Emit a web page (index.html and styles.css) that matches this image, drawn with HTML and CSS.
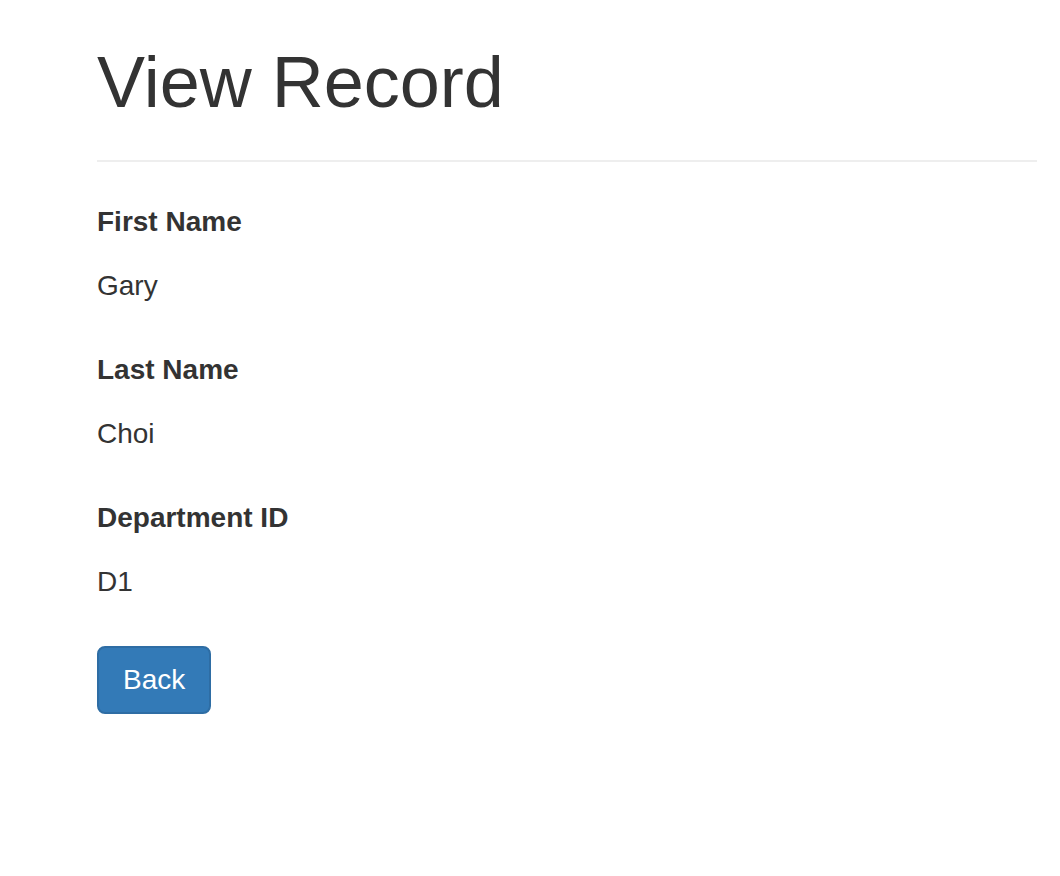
FILE: index.html
```html
<!DOCTYPE html>
<html lang="en">
<head>
<meta charset="utf-8">
<title>View Record</title>
<link rel="stylesheet" href="styles.css">
</head>
<body>
<div class="container">
  <div class="page-header">
    <h1>View Record</h1>
  </div>
  <div class="form-group">
    <label>First Name</label>
    <p class="form-control-static">Gary</p>
  </div>
  <div class="form-group">
    <label>Last Name</label>
    <p class="form-control-static">Choi</p>
  </div>
  <div class="form-group">
    <label>Department ID</label>
    <p class="form-control-static">D1</p>
  </div>
  <p class="actions"><a href="#" class="btn btn-primary">Back</a></p>
</div>
</body>
</html>
```

FILE: styles.css
```css
html, body {
  margin: 0;
  padding: 0;
  background: #fff;
}
body {
  font-family: "Liberation Sans", Arial, Helvetica, sans-serif;
  font-size: 28px;
  line-height: 40px;
  color: #333;
}
.container {
  width: 940px;
  padding-left: 97px;
  box-sizing: content-box;
}
.page-header {
  padding-bottom: 18px;
  margin: 0 0 40px;
  border-bottom: 2px solid #eee;
}
.page-header h1 {
  font-size: 72px;
  font-weight: 500;
  line-height: 1.1;
  margin: 43px 0 20px;
}
.form-group {
  margin-bottom: 30px;
}
.form-group label {
  display: block;
  font-weight: 700;
  margin-bottom: 10px;
}
.form-control-static {
  margin: 0;
  padding: 14px 0;
  min-height: 68px;
  box-sizing: border-box;
}
.actions {
  margin: 0;
}
.btn {
  display: inline-block;
  padding: 12px 24px;
  font-size: 28px;
  line-height: 40px;
  border: 2px solid transparent;
  border-radius: 8px;
  text-decoration: none;
}
.btn-primary {
  color: #fff;
  background-color: #337ab7;
  border-color: #2e6da4;
}
```
